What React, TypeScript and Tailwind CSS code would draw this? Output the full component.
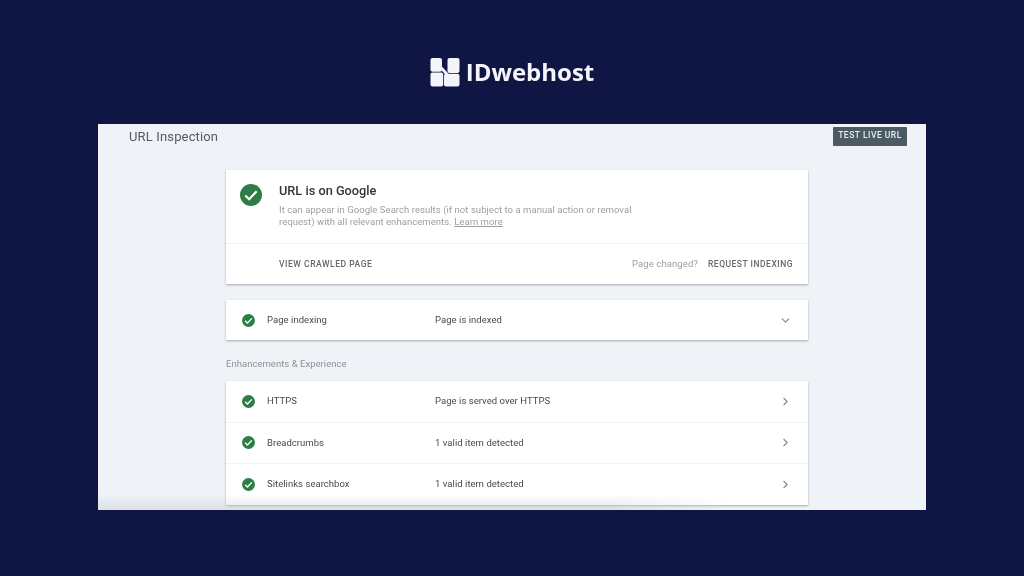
import { ChevronDown, ChevronRight } from 'lucide-react';

const font = { fontFamily: 'Roboto, sans-serif' };

function CheckBadge({ size }: { size: number }) {
	return (
		<svg width={size} height={size} viewBox="0 0 24 24" className="shrink-0">
			<circle cx="12" cy="12" r="12" fill="#2e7d46" />
			<path d="M5.8 12.6l4.2 4 8.2-8.6" fill="none" stroke="#fff" strokeWidth="2.4" />
		</svg>
	);
}

function Logo() {
	return (
		<svg width="30" height="29" viewBox="0 0 30 29" className="shrink-0">
			<rect x="0.5" y="0" width="11.5" height="13.7" rx="2" fill="#f4f5fa" />
			<rect x="17.5" y="0" width="12" height="15" rx="2" fill="#f4f5fa" />
			<rect x="0.5" y="14.5" width="12.7" height="14" rx="2" fill="#f4f5fa" />
			<rect x="14" y="15.8" width="15.5" height="12.7" rx="2" fill="#f4f5fa" />
			<path d="M10 8.5l9 10" stroke="#f4f5fa" strokeWidth="2.8" fill="none" />
		</svg>
	);
}

function Row({ name, status, open, height = 'h-[41.5px]' }: { name: string; status: string; open?: boolean; height?: string }) {
	return (
		<div className={`${height} flex items-center pl-[16px] pr-[16px]`}>
			<CheckBadge size={13} />
			<span className="ml-[12px] w-[168px] text-[9.5px] tracking-[0.04px] text-[#46494e]">{name}</span>
			<span className="flex-1 text-[9.5px] tracking-[0.04px] text-[#46494e]">{status}</span>
			{open ? (
				<ChevronDown size={13} className="text-[#85888c]" />
			) : (
				<ChevronRight size={13} className="text-[#85888c]" />
			)}
		</div>
	);
}

export default function App() {
	return (
		<div className="w-[1024px] h-[576px] bg-[#0f1644] overflow-hidden flex flex-col items-center" style={font}>
			{/* logo */}
			<div className="h-[124px] pt-[20px] flex items-center justify-center gap-[6px] blur-[0.3px]">
				<Logo />
				<span className="text-[24px] font-bold text-[#f4f5fa] leading-none" style={{ fontFamily: '"Open Sans", sans-serif' }}>
					IDwebhost
				</span>
			</div>

			{/* панель */}
			<div className="relative w-[828px] h-[386px] bg-[#eff3f8] overflow-hidden flex flex-col blur-[0.3px]">
				<div className="flex justify-between items-start pl-[31px] pr-[19px] pt-[3px]">
					<h1 className="mt-[1px] text-[13px] leading-[18px] font-normal tracking-[0.15px] text-[#55595f]">URL Inspection</h1>
					<button className="h-[19px] w-[74px] pb-[2px] bg-[#4b5a63] rounded-[1px] text-[8.5px] font-medium tracking-[0.5px] text-[#e6ebee]">
						TEST LIVE URL
					</button>
				</div>

				<div className="ml-[128px] w-[582px] mt-[24px] flex flex-col">
					<div className="bg-white shadow-[0_1px_2px_rgba(60,64,67,0.4)]">
						<div className="h-[74px] flex border-b border-[#f0f1f2] pl-[14px] pt-[14px]">
							<CheckBadge size={22} />
							<div className="ml-[17px]">
								<p className="text-[12.75px] leading-[14px] font-medium text-[#33363a]">URL is on Google</p>
								<p className="mt-[5.5px] text-[9.5px] leading-[12.5px] tracking-[0.05px] text-[#9c9ea1]">
									It can appear in Google Search results (if not subject to a manual action or removal
									<br />
									request) with all relevant enhancements. <span className="underline">Learn more</span>
								</p>
							</div>
						</div>
						<div className="h-[40px] flex items-center justify-between pl-[53px] pr-[15px]">
							<span className="text-[8.5px] font-medium tracking-[0.55px] text-[#65686c]">VIEW CRAWLED PAGE</span>
							<div className="flex items-center gap-[10px]">
								<span className="text-[9.5px] tracking-[0.1px] text-[#9c9ea1]">Page changed?</span>
								<span className="text-[8.5px] font-medium tracking-[0.5px] text-[#65686c]">REQUEST INDEXING</span>
							</div>
						</div>
					</div>

					<div className="mt-[16px] bg-white shadow-[0_1px_2px_rgba(60,64,67,0.4)]">
						<Row name="Page indexing" status="Page is indexed" open height="h-[40px]" />
					</div>

					<p className="mt-[17px] mb-[11px] text-[9.5px] leading-[13px] tracking-[0.03px] text-[#8e9195]">Enhancements &amp; Experience</p>

					<div className="bg-white shadow-[0_1px_2px_rgba(60,64,67,0.4)] divide-y divide-[#f2f3f4]">
						<Row name="HTTPS" status="Page is served over HTTPS" />
						<Row name="Breadcrumbs" status="1 valid item detected" />
						<Row name="Sitelinks searchbox" status="1 valid item detected" height="h-[41px]" />
					</div>
				</div>

				{/* затемнение снизу */}
				<div className="absolute bottom-0 left-0 w-[640px] h-[16px] bg-gradient-to-t from-[#c9ced4]/50 to-transparent [mask-image:linear-gradient(to_right,black_80%,transparent)]" />
			</div>
		</div>
	);
}
